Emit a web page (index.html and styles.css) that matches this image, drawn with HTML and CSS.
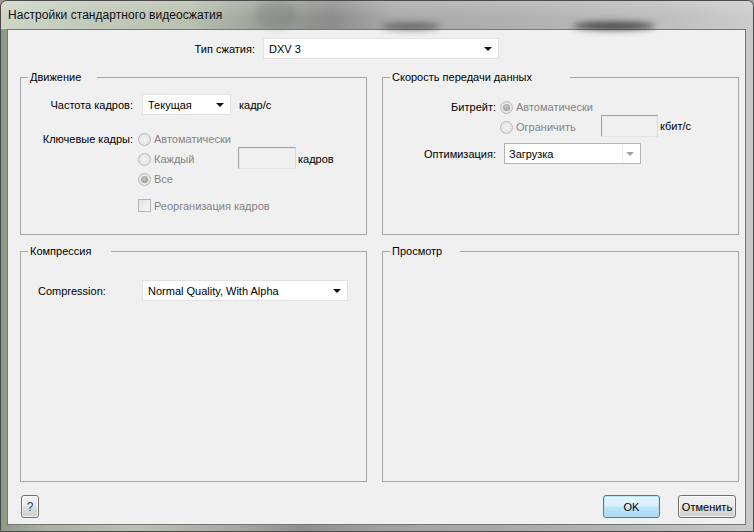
FILE: index.html
```html
<!DOCTYPE html>
<html lang="ru">
<head>
<meta charset="utf-8">
<title>Настройки стандартного видеосжатия</title>
<link rel="stylesheet" href="styles.css">
</head>
<body>
<div class="window">
  <div class="titlebar">
    <span class="blob blob1"></span><span class="blob blob2"></span><span class="blob blob3"></span>
    <span class="title">Настройки стандартного видеосжатия</span>
  </div>
  <div class="client">
    <div class="type-row">
      <span class="type-label">Тип сжатия:</span>
      <div class="combo combo-type"><span class="combo-text">DXV 3</span><i class="arrow"></i></div>
    </div>

    <div class="groups">
      <fieldset class="group">
        <legend class="lg-motion">Движение</legend>
        <div class="motion">
          <div class="row fps-row">
            <span class="lbl lbl-motion">Частота кадров:</span>
            <div class="combo combo-fps"><span class="combo-text">Текущая</span><i class="arrow"></i></div>
            <span class="unit">кадр/с</span>
          </div>
          <div class="keyframes">
            <span class="lbl lbl-motion lbl-key">Ключевые кадры:</span>
            <div class="options">
              <div class="opt"><span class="radio"></span><span class="dis">Автоматически</span></div>
              <div class="opt"><span class="opt-item"><span class="radio"></span><span class="dis">Каждый</span></span><span class="edit edit-key"></span><span class="unit2">кадров</span></div>
              <div class="opt"><span class="radio checked"></span><span class="dis">Все</span></div>
              <div class="opt opt-check"><span class="check"></span><span class="dis">Реорганизация кадров</span></div>
            </div>
          </div>
        </div>
      </fieldset>

      <fieldset class="group">
        <legend class="lg-speed">Скорость передачи данных</legend>
        <div class="speed">
          <div class="bitrate">
            <span class="lbl lbl-speed lbl-key">Битрейт:</span>
            <div class="options options-speed">
              <div class="opt"><span class="radio checked"></span><span class="dis">Автоматически</span></div>
              <div class="opt"><span class="opt-item opt-item-speed"><span class="radio"></span><span class="dis">Ограничить</span></span><span class="edit edit-rate"></span><span class="unit3">кбит/с</span></div>
            </div>
          </div>
          <div class="row opt-row">
            <span class="lbl lbl-speed">Оптимизация:</span>
            <div class="combo combo-opt"><span class="combo-text">Загрузка</span><span class="combo-btn"><i class="arrow arrow-gray"></i></span></div>
          </div>
        </div>
      </fieldset>

      <fieldset class="group">
        <legend class="lg-comp">Компрессия</legend>
        <div class="compress">
          <div class="row">
            <span class="lbl lbl-comp">Compression:</span>
            <div class="combo combo-comp"><span class="combo-text">Normal Quality, With Alpha</span><i class="arrow"></i></div>
          </div>
        </div>
      </fieldset>

      <fieldset class="group">
        <legend class="lg-view">Просмотр</legend>
      </fieldset>
    </div>

    <div class="footer">
      <button class="btn btn-help" type="button">?</button>
      <div class="footer-right">
        <button class="btn btn-ok" type="button">OK</button>
        <button class="btn btn-cancel" type="button">Отменить</button>
      </div>
    </div>
  </div>
</div>
</body>
</html>
```

FILE: styles.css
```css
* { box-sizing: border-box; }

html, body {
  margin: 0;
  padding: 0;
  width: 754px;
  height: 532px;
  overflow: hidden;
  background: #9a9a9a;
}

body {
  font-family: "Liberation Sans", Arial, sans-serif;
  font-size: 11px;
  color: #000;
}

.window {
  width: 754px;
  height: 532px;
  border: 1px solid #4a4a4a;
  border-radius: 7px 7px 0 0;
  background:
    linear-gradient(90deg, #8e9a86 0%, #a9b1a2 6%, #b9c0b4 18%, #a8aba4 30%, #8f908e 40%, #a2a2a2 52%, #a8a8a8 65%, #b4b4b4 82%, #c9c9c9 100%);
  overflow: hidden;
  display: flex;
  flex-direction: column;
}

.titlebar {
  position: relative;
  height: 28px;
  flex: none;
  padding: 7px 0 0 7px;
  background:
    linear-gradient(180deg, rgba(255,255,255,0.18) 0%, rgba(255,255,255,0) 60%),
    linear-gradient(90deg, #cfd6c6 0%, #c3cbba 10%, #b9c1b0 25%, #9ea39a 34%, #8c8c8c 44%, #a9a9a9 52%, #b1b1b1 70%, #bebebe 88%, #cccccc 100%);
}

.blob {
  position: absolute;
  border-radius: 50%;
  filter: blur(3px);
}
.blob1 { left: 572px; top: 21px; width: 82px; height: 8px; background: rgba(30,30,30,0.75); }
.blob2 { left: 380px; top: 22px; width: 60px; height: 7px; background: rgba(40,40,40,0.55); }
.blob3 { left: 255px; top: 0; width: 40px; height: 28px; background: rgba(120,120,120,0.35); }

.title {
  position: relative;
  font-size: 12px;
  color: #111;
  letter-spacing: 0.05px;
}

.client {
  margin: 0 7px 0 6px;
  height: 496px;
  flex: none;
  border: 1px solid #767676;
  background: #f0f0f0;
  display: flex;
  flex-direction: column;
}

/* top row */
.type-row {
  display: flex;
  align-items: center;
  margin-top: 8px;
  height: 21px;
}
.type-label {
  width: 247px;
  text-align: right;
}

.combo {
  position: relative;
  height: 21px;
  background: #fff;
  border: 1px solid #e2e2e2;
  display: flex;
  align-items: center;
  padding-left: 5px;
}
.combo-type { width: 236px; margin-left: 8px; }
.combo-text { white-space: nowrap; }

.arrow {
  position: absolute;
  right: 6px;
  top: 8px;
  width: 0;
  height: 0;
  border-left: 4px solid transparent;
  border-right: 4px solid transparent;
  border-top: 4px solid #111;
}
.arrow-gray { border-top-color: #a3a3a3; }

/* groups */
.groups {
  display: grid;
  grid-template-columns: 347px 357px;
  grid-template-rows: 164px 237px;
  column-gap: 15px;
  row-gap: 10px;
  margin: 12px 0 0 12px;
}

.group {
  margin: 0;
  padding: 0;
  min-width: 0;
  border: 1px solid #a6a6a6;
}
.group legend {
  margin-left: 7px;
  padding: 0 2px;
  line-height: 13px;
  font-size: 11px;
}
.group .lg-motion { padding-right: 16px; }
.group .lg-speed { padding-right: 38px; }
.group .lg-comp { padding-right: 20px; }
.group .lg-view { padding-right: 18px; }

.row {
  display: flex;
  align-items: center;
}

.lbl { text-align: right; white-space: nowrap; }
.lbl-motion { width: 112px; }
.lbl-speed { width: 113px; }

.motion { padding-top: 10px; }
.combo-fps { width: 89px; margin-left: 9px; }
.unit { margin-left: 8px; }

.keyframes {
  display: flex;
  margin-top: 14px;
}
.lbl-key { line-height: 20px; }

.options {
  margin-left: 5px;
  display: flex;
  flex-direction: column;
}
.opt {
  display: flex;
  align-items: center;
  height: 20px;
}
.opt-check { margin-top: 6px; height: 21px; }
.opt-item {
  display: flex;
  align-items: center;
  width: 100px;
}
.dis { color: #838383; margin-left: 3px; white-space: nowrap; }

.radio {
  flex: none;
  width: 13px;
  height: 13px;
  border-radius: 50%;
  border: 1px solid #b8b8b8;
  background: radial-gradient(circle at 50% 50%, #f4f4f4 0%, #e6e6e6 60%, #dcdcdc 100%);
  position: relative;
}
.radio.checked::after {
  content: "";
  position: absolute;
  left: 2px;
  top: 2px;
  width: 7px;
  height: 7px;
  border-radius: 50%;
  background: radial-gradient(circle at 45% 40%, #c8c8c8 0%, #9e9e9e 70%, #8c8c8c 100%);
}

.check {
  flex: none;
  width: 13px;
  height: 13px;
  border: 1px solid #b4b4b4;
  background: linear-gradient(135deg, #e3e3e3, #f6f6f6);
}

.edit {
  flex: none;
  height: 22px;
  background: #f0f0f0;
  border: 1px solid;
  border-color: #a3a3a3 #dadada #e3e3e3 #a3a3a3;
  box-shadow: inset 1px 1px 0 #e8e8e8;
}
.edit-key { width: 58px; margin-top: -2px; }
.unit2 { margin-left: 2px; }

/* speed */
.speed { padding-top: 13px; }
.bitrate { display: flex; }
.options-speed { margin-left: 4px; }
.opt-item-speed { width: 101px; }
.edit-rate { width: 57px; margin-top: -2px; }
.unit3 { margin-left: 2px; margin-top: -2px; }

.opt-row { margin-top: 6px; }
.combo-opt {
  width: 137px;
  margin-left: 8px;
  border-color: #b3b3b3;
  padding-left: 4px;
}
.combo-btn {
  position: absolute;
  right: 0;
  top: 0;
  bottom: 0;
  width: 18px;
  border-left: 1px solid #f0f0f0;
  background: #fff;
}

/* compression */
.compress { padding-top: 22px; padding-left: 17px; }
.lbl-comp { width: 104px; text-align: left; }
.combo-comp { width: 206px; }

/* footer */
.footer {
  display: flex;
  justify-content: space-between;
  align-items: flex-start;
  margin-top: 13px;
  padding: 0 9px 0 13px;
}
.footer-right {
  display: flex;
  gap: 18px;
}

.btn {
  height: 23px;
  border: 1px solid #707070;
  border-radius: 3px;
  background: linear-gradient(180deg, #f2f2f2 0%, #ebebeb 48%, #dddddd 52%, #cfcfcf 100%);
  box-shadow: inset 0 0 0 1px rgba(255,255,255,0.7);
  font-family: "Liberation Sans", Arial, sans-serif;
  font-size: 11px;
  color: #000;
  padding: 0;
  margin: 0;
}
.btn-help { width: 18px; font-size: 12px; color: #2a3a55; }
.btn-ok {
  width: 57px;
  border-color: #3c7fb1;
  background: linear-gradient(180deg, #eaf6fd 0%, #d9f0fc 48%, #bee6fd 52%, #a7d9f5 100%);
  box-shadow: inset 0 0 0 1px rgba(180,225,250,0.9);
}
.btn-cancel { width: 58px; }
```
